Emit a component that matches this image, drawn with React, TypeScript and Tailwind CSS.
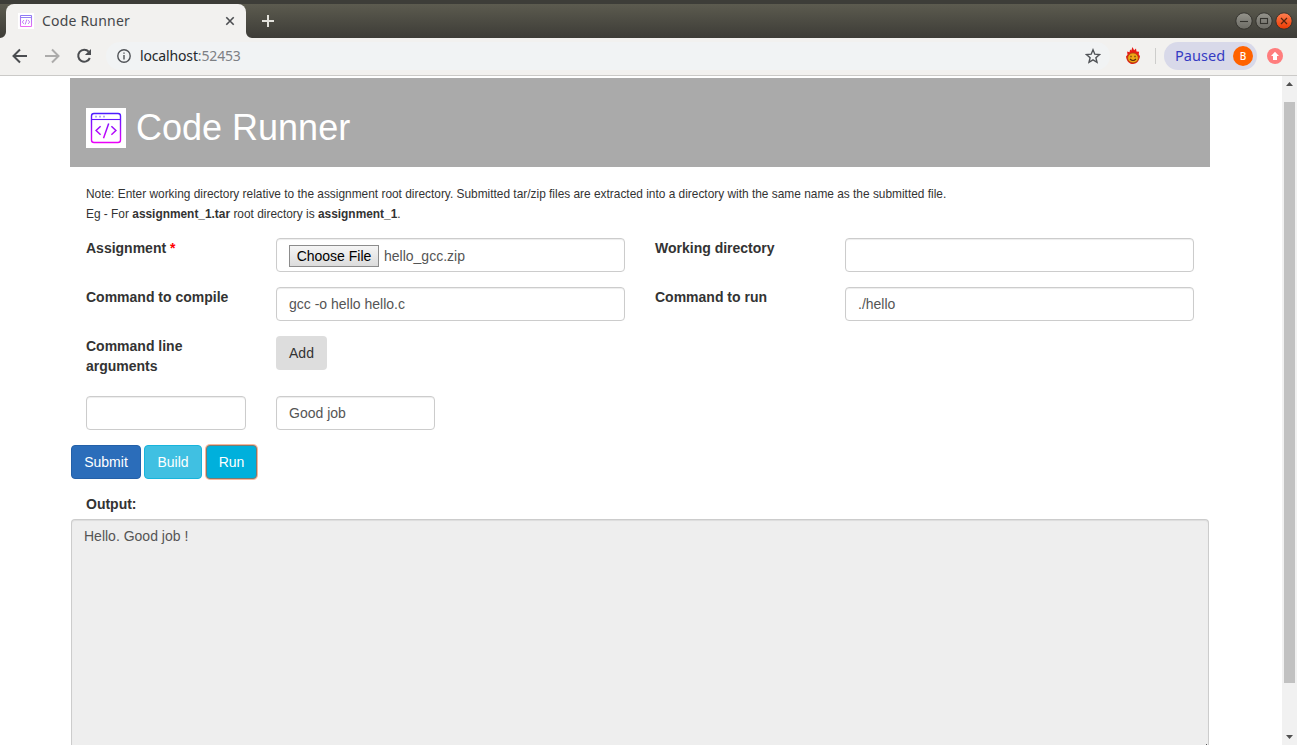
import React from "react";

const ui = "font-['Noto_Sans',sans-serif]";
const field =
  "flex h-[34px] items-center rounded border border-[#ccc] bg-white px-3 text-[#555] shadow-[inset_0_1px_1px_rgba(0,0,0,0.075)]";

function CodeLogo({ id, className }: { id: string; className: string }) {
  return (
    <svg className={className} viewBox="0 0 40 40" fill="none">
      <defs>
        <linearGradient id={id} x1="0" y1="5" x2="0" y2="35" gradientUnits="userSpaceOnUse">
          <stop offset="0" stopColor="#4a1cff" />
          <stop offset="1" stopColor="#ec00f8" />
        </linearGradient>
      </defs>
      <rect width="40" height="40" fill="#fff" />
      <rect x="5.5" y="5.5" width="29" height="29" rx="2.5" stroke={`url(#${id})`} strokeWidth="1.4" />
      <path d="M5.5 11.5h29" stroke="#6419ff" strokeWidth="1.1" />
      <path d="M9 8.7h2M13 8.7h2M17 8.7h2" stroke="#b5a8f5" strokeWidth="1.8" />
      <path d="M14.6 18.2l-4.5 4.3 4.5 4.3M25.4 18.2l4.5 4.3-4.5 4.3M22.7 15.4l-5.2 14.8" stroke={`url(#${id})`} strokeWidth="1.5" />
    </svg>
  );
}

function TabLogo() {
  return (
    <svg className="size-4" viewBox="0 0 16 16" fill="none">
      <defs>
        <linearGradient id="tabLogo" x1="0" y1="2" x2="0" y2="14" gradientUnits="userSpaceOnUse">
          <stop stopColor="#8b7bf5" />
          <stop offset="1" stopColor="#ee6af5" />
        </linearGradient>
      </defs>
      <rect width="16" height="16" fill="#fff" />
      <rect x="2.5" y="2.5" width="11" height="11" rx=".5" stroke="url(#tabLogo)" strokeWidth="1.1" />
      <path d="M2.5 4.5h11" stroke="#9582f5" />
      <path d="M6 7L4.3 9 6 11M10 7l1.7 2L10 11M8.8 6.5l-1.6 5" stroke="#bd70f4" strokeWidth=".9" />
    </svg>
  );
}

function TabBar() {
  return (
    <div className="flex h-[38px] shrink-0 flex-col bg-[#3e3d38]">
      <div className="h-1 shrink-0 bg-[#3d3d38]" />
      <div className={`flex h-[34px] items-end bg-linear-to-b from-[#5c5b4f] to-[#3d3c37] ${ui}`}>
        <svg className="size-1.5 shrink-0" viewBox="0 0 6 6">
          <path d="M6 0v6H0a6 6 0 006-6z" fill="#f2f1ef" />
        </svg>
        <div className="flex h-[34px] w-60 items-center rounded-t-lg bg-[#f2f1ef] pr-2.5 pl-3">
          <TabLogo />
          <span className="mb-0.5 ml-2 text-[14px] tracking-[0.2px] whitespace-nowrap text-[#45474a]">Code Runner</span>
          <svg className="ml-auto size-3" viewBox="0 0 12 12" stroke="#4b4d50" strokeWidth="1.6">
            <path d="M2.3 2.3l7.4 7.4M9.7 2.3L2.3 9.7" />
          </svg>
        </div>
        <svg className="size-1.5 shrink-0" viewBox="0 0 6 6">
          <path d="M0 0v6h6a6 6 0 01-6-6z" fill="#f2f1ef" />
        </svg>
        <svg className="mb-[11px] ml-2.5 size-3" viewBox="0 0 12 12" stroke="#e3e2dc" strokeWidth="2">
          <path d="M6 0v12M0 6h12" />
        </svg>
        <svg className="mr-[3px] mb-2 ml-auto h-[18px] w-[60px]" viewBox="0 0 60 18" fill="none">
          <defs>
            <linearGradient id="grayButton" x1="0" y1="0" x2="0" y2="1">
              <stop stopColor="#95948c" />
              <stop offset="1" stopColor="#6c6b64" />
            </linearGradient>
            <linearGradient id="closeButton" x1="0" y1="0" x2="0" y2="1">
              <stop stopColor="#ff8052" />
              <stop offset="1" stopColor="#ed3900" />
            </linearGradient>
          </defs>
          <circle cx="10" cy="9" r="8.2" fill="url(#grayButton)" stroke="#34332e" />
          <path d="M6 9.5h8" stroke="#34332e" strokeWidth="1.1" />
          <circle cx="30" cy="9" r="8.2" fill="url(#grayButton)" stroke="#34332e" />
          <rect x="26.5" y="6.5" width="7" height="5" stroke="#34332e" strokeWidth="1.1" />
          <circle cx="50" cy="9" r="8.2" fill="url(#closeButton)" stroke="#34332e" />
          <path d="M47 6l6 6M53 6l-6 6" stroke="#56240f" strokeWidth="1.2" />
        </svg>
      </div>
    </div>
  );
}

function Toolbar() {
  return (
    <div className={`flex h-[38px] shrink-0 items-center border-b border-[#cbcac8] bg-[#f2f1ef] pb-px ${ui}`}>
      <svg className="ml-2 h-6 w-[90px] shrink-0" viewBox="0 0 90 24" fill="none" strokeWidth="2">
        <path d="M19 12H6M12 5.5L5.5 12l6.5 6.5" stroke="#4b4d50" />
        <path d="M37 12h13M44 5.5l6.5 6.5-6.5 6.5" stroke="#acabaa" />
        <path d="M80.7 7.7A6 6 0 1081.8 14" stroke="#4b4d50" />
        <path d="M83 5v6.1h-6.1z" fill="#4b4d50" />
      </svg>
      <div className="ml-2 flex h-7 w-[1004px] items-center rounded-full bg-[#f1f3f4] pr-[9px] pl-[11px]">
        <svg className="size-[14px]" viewBox="0 0 14 14" fill="none" stroke="#505357" strokeWidth="1.4">
          <circle cx="7" cy="7" r="6.2" />
          <path d="M7 6v4.4M7 3.4v1.4" />
        </svg>
        <span className="mb-px ml-[9px] text-[14px] tracking-[-0.15px] text-[#25282b]">
          localhost<span className="text-[#7d8084]">:52453</span>
        </span>
        <svg className="ml-auto size-4" viewBox="0 0 16 16" fill="none" stroke="#505357" strokeWidth="1.4">
          <path d="M8 1.8l1.8 4.4 4.7.4-3.6 3.1 1.1 4.6L8 11.8l-4 2.5 1.1-4.6-3.6-3.1 4.7-.4z" />
        </svg>
      </div>
      <svg className="ml-[15px] h-[18px] w-4" viewBox="0 0 16 18">
        <path d="M7.5 0l1.6 3.2L11 1.5l.5 3 2.6.2-.4 2.6 1.3 2C14 15 11 17 8 17s-6.5-2.5-7-7.6l1.5-1.7-.4-3.2 2.4.7.6-2.8 1.2 1z" fill="#e81b14" />
        <ellipse cx="8" cy="10.9" rx="5.3" ry="4.9" fill="#f0a516" stroke="#9d4a0d" strokeWidth=".7" />
        <path d="M6 8.7v1.6M10 8.7v1.6M5 12q3 3 6 0" fill="none" stroke="#502c0c" strokeWidth="1.1" />
      </svg>
      <div className="ml-3.5 h-4 w-px bg-[#cdcdcb]" />
      <div className="ml-2 flex h-7 w-[93px] items-center rounded-full bg-[#d8d9e9] pr-1 pl-[11px] text-[14.5px] tracking-[0.05px] text-[#353bc3]">
        Paused
        <span className="ml-auto flex size-5 items-center justify-center rounded-full bg-[#ff6200] text-[10px] font-medium tracking-normal text-white">B</span>
      </div>
      <svg className="ml-2.5 size-4" viewBox="0 0 16 16">
        <circle cx="8" cy="8" r="8" fill="#ff7d7d" />
        <path d="M8 3.8l4 4.2h-2v4H6V8H4z" fill="#fff" />
      </svg>
    </div>
  );
}

function ScrollBar() {
  return (
    <div className="flex w-[15px] shrink-0 flex-col items-center bg-[#f1f1f1]">
      <svg className="mt-1.5 h-1 w-[7px]" viewBox="0 0 7 4"><path d="M0 4L3.5 0 7 4z" fill="#505050" /></svg>
      <div className="mt-4 h-[581px] w-[11px] shrink-0 bg-[#c1c1c1]" />
      <svg className="mt-auto mb-1.5 h-1 w-[7px]" viewBox="0 0 7 4"><path d="M0 0h7L3.5 4z" fill="#505050" /></svg>
    </div>
  );
}

export default function App() {
  return (
    <div className="flex h-[745px] w-[1297px] flex-col overflow-hidden bg-white">
      <TabBar />
      <Toolbar />
      <div className="flex min-h-0 flex-1">
        <main className="flex min-w-0 flex-1 flex-col overflow-hidden pt-0.5 pl-[70px] font-['Liberation_Sans',Arial,sans-serif] text-[14px] leading-5 text-[#333]">
          <header className="flex h-[89px] w-[1140px] shrink-0 items-center bg-[#aaa] pt-[11px] pl-4">
            <CodeLogo id="headerLogo" className="size-10" />
            <h1 className="ml-2.5 text-[36px] leading-[40px] text-white">Code Runner</h1>
          </header>
          <p className="mt-[17px] ml-4 text-[11.9px] whitespace-nowrap">
            Note: Enter working directory relative to the assignment root directory. Submitted tar/zip files are extracted into a directory with the same name as the submitted file.
            <br />
            Eg - For <b>assignment_1.tar</b> root directory is <b>assignment_1</b>.
          </p>
          <div className="mt-3.5 ml-4 grid w-[1108px] shrink-0 grid-cols-[160px_349px_160px_349px] gap-x-[30px] gap-y-[15px]">
            <label className="font-bold">Assignment <span className="text-[#f00]">*</span></label>
            <div className={`pt-0.5 ${field}`}>
              <button className="flex h-[22px] w-[90px] items-center justify-center border border-[#8c8c8c] bg-linear-to-b from-[#f5f5f5] to-[#dcdcdc] whitespace-nowrap text-black">Choose File</button>
              <span className="ml-[5px]">hello_gcc.zip</span>
            </div>
            <label className="font-bold">Working directory</label>
            <div className={field} />
            <label className="font-bold">Command to compile</label>
            <div className={field}>gcc -o hello hello.c</div>
            <label className="font-bold">Command to run</label>
            <div className={field}>./hello</div>
            <label className="font-bold">Command line arguments</label>
            <div>
              <button className="h-[34px] w-[51px] rounded bg-[#ddd]">Add</button>
            </div>
          </div>
          <div className="mt-5 ml-4 flex shrink-0 gap-[30px]">
            <div className={`w-40 ${field}`} />
            <div className={`w-[159px] ${field}`}>Good job</div>
          </div>
          <div className="mt-[15px] ml-px flex shrink-0 gap-[3px] text-white">
            <button className="h-[34px] w-[70px] rounded border border-[#2360a8] bg-[#2b6dba]">Submit</button>
            <button className="h-[34px] w-[58px] rounded border border-[#18b4dc] bg-[#40c0e2]">Build</button>
            <button className="ml-px h-[34px] w-[51px] rounded border border-[#7d7a70] bg-[#00b0dc] shadow-[0_0_0_1px_#fbb598]">Run</button>
          </div>
          <label className="mt-[15px] ml-4 font-bold">Output:</label>
          <div className="mt-[5px] ml-px flex w-[1138px] flex-1 rounded-t border border-b-0 border-[#ccc] bg-[#eee] pr-px pl-3 text-[#555] shadow-[inset_0_1px_1px_rgba(0,0,0,0.075)]">
            <span className="pt-1.5">Hello. Good job !</span>
            <span className="mt-auto ml-auto size-px bg-[#555]" />
          </div>
        </main>
        <ScrollBar />
      </div>
    </div>
  );
}
